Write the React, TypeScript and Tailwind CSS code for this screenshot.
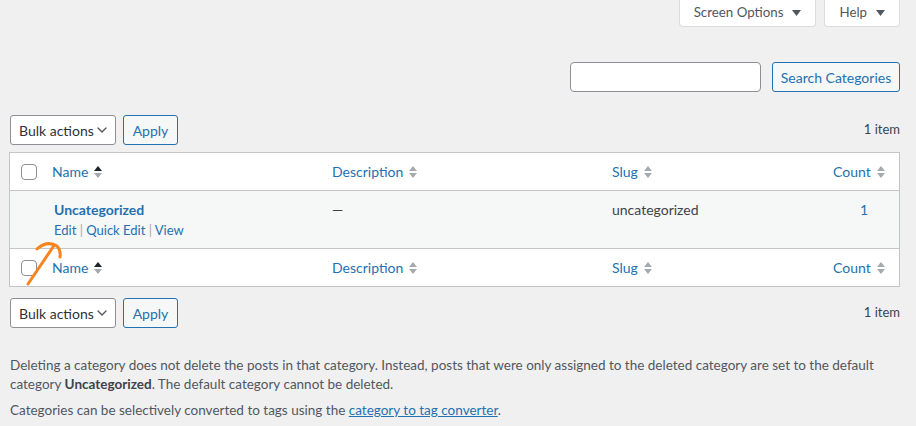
import { ChevronDown } from 'lucide-react';

const font = { fontFamily: 'Lato, "Liberation Sans", sans-serif' };

type SortProps = { active?: boolean };

const SortArrows = ({ active }: SortProps) => (
    <svg width="10" height="14" viewBox="0 0 10 14" className="ml-[5px] inline-block">
        <path d="M1 6 L5 1 L9 6 Z" fill={active ? '#1d2327' : '#a7aaad'} />
        <path d="M1 8 L5 13 L9 8 Z" fill="#a7aaad" />
    </svg>
);

const Checkbox = () => (
    <span className="block w-4 h-4 rounded-[4px] border border-[#8c8f94] bg-white" />
);

const HeadRow = ({ bottom }: { bottom?: boolean }) => (
    <div
        className={`flex items-center h-[38px] bg-white text-[14px] text-[#2271b1] ${
            bottom ? 'border-t border-[#c3c4c7]' : 'border-b border-[#c3c4c7]'
        }`}
    >
        <div className="w-[42px] pl-[11px]">
            <Checkbox />
        </div>
        <div className="w-[280px] flex items-center">
            Name <SortArrows active />
        </div>
        <div className="w-[280px] flex items-center">
            Description <SortArrows />
        </div>
        <div className="flex-1 flex items-center">
            Slug <SortArrows />
        </div>
        <div className="w-[66px] flex items-center">
            Count <SortArrows />
        </div>
    </div>
);

const TableNav = () => (
    <div className="flex items-center h-[30px] pl-[1px]">
        <div className="flex items-center justify-between whitespace-nowrap w-[106px] h-[30px] pl-[8px] pr-[6px] bg-white border border-[#8c8f94] rounded-[3px] text-[14px] text-[#2c3338]">
            Bulk actions
            <ChevronDown size={16} strokeWidth={2} className="shrink-0 text-[#50575e]" />
        </div>
        <button className="ml-[7px] h-[30px] w-[55px] border border-[#2271b1] rounded-[3px] bg-[#f6f7f7] text-[14px] text-[#2271b1]">
            Apply
        </button>
        <span className="ml-auto text-[13px] text-[#3c434a]">1 item</span>
    </div>
);

const ToggleTab = ({ label }: { label: string }) => (
    <div className="flex items-center gap-[9px] h-[27px] px-[14px] bg-white border border-t-0 border-[#dcdcde] rounded-b-[4px]">
        {label}
        <svg width="9" height="6" viewBox="0 0 9 6">
            <path d="M0 0 L9 0 L4.5 6 Z" fill="#50575e" />
        </svg>
    </div>
);

const App = () => {
    return (
        <div className="relative min-h-[426px] bg-[#f0f0f1] pl-[9px] pr-[16px] text-[#3c434a]" style={font}>
            {/* screen meta tabs */}
            <div className="flex justify-end gap-[8px] text-[13.3px] text-[#50575e]">
                <ToggleTab label="Screen Options" />
                <ToggleTab label="Help" />
            </div>

            {/* search box */}
            <div className="flex justify-end gap-[11px] mt-[35px]">
                <div className="w-[191px] h-[30px] bg-white border border-[#8c8f94] rounded-[4px]" />
                <button className="h-[30px] w-[128px] border border-[#2271b1] rounded-[3px] bg-[#f6f7f7] text-[14px] text-[#2271b1]">
                    Search Categories
                </button>
            </div>

            <div className="mt-[23px]">
                <TableNav />
            </div>

            {/* category table */}
            <div className="mt-[7px] border border-[#c3c4c7] bg-white">
                <HeadRow />
                <div className="flex h-[57px] bg-[#f6f7f7] text-[14px]">
                    <div className="w-[42px]" />
                    <div className="w-[280px] pt-[8px] pl-[2px]">
                        <div className="font-bold text-[#2271b1]">Uncategorized</div>
                        <div className="mt-[1px] text-[13px] text-[#2271b1]">
                            Edit <span className="text-[#a7aaad]">|</span> Quick Edit{' '}
                            <span className="text-[#a7aaad]">|</span> View
                        </div>
                    </div>
                    <div className="w-[280px] pt-[8px]">—</div>
                    <div className="flex-1 pt-[8px]">uncategorized</div>
                    <div className="w-[66px] pt-[8px] pl-[27px] text-[#2271b1]">1</div>
                </div>
                <HeadRow bottom />
            </div>

            <div className="mt-[11px]">
                <TableNav />
            </div>

            <div className="mt-[28px] text-[13.5px] leading-[19px] text-[#50575e] pl-[1px] pr-[20px]">
                <p>
                    Deleting a category does not delete the posts in that category. Instead, posts that were only assigned
                    to the deleted category are set to the default category <strong className="text-[#3c434a]">Uncategorized</strong>. The
                    default category cannot be deleted.
                </p>
                <p className="mt-[7px]">
                    Categories can be selectively converted to tags using the{' '}
                    <span className="underline text-[#2271b1]">category to tag converter</span>.
                </p>
            </div>

            {/* hand-drawn marker stroke */}
            <svg className="absolute left-0 top-0 pointer-events-none" width="80" height="300" viewBox="0 0 80 300">
                <path
                    d="M28 284 L53 247 M37 249 Q47 240 57 246 Q61 250 60 257"
                    fill="none"
                    stroke="#f7841f"
                    strokeWidth="3"
                    strokeLinecap="round"
                    strokeLinejoin="round"
                />
            </svg>
        </div>
    );
};

export default App;
